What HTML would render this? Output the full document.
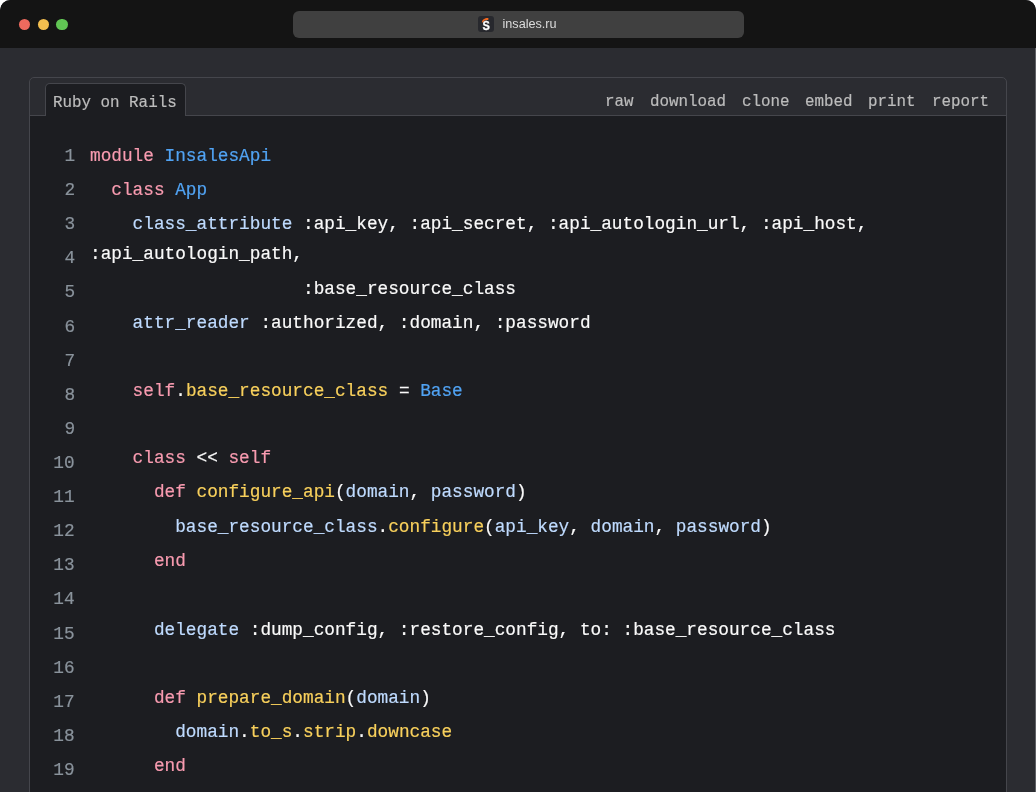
<!DOCTYPE html>
<html lang="en">
<head>
<meta charset="utf-8">
<title>insales.ru</title>
<style>
html,body{margin:0;padding:0;}
body{width:1036px;height:792px;overflow:hidden;background:#fff;position:relative;}
.win{position:absolute;left:0;top:0;width:1036px;height:792px;background:#2b2c31;border-radius:10.5px 10.5px 0 0;overflow:hidden;will-change:transform;}
.titlebar{position:absolute;left:0;top:0;width:1036px;height:48px;background:#141414;}
.dot{position:absolute;top:18.7px;width:11.6px;height:11.6px;border-radius:50%;}
.urlbar{position:absolute;left:292.5px;top:11px;width:451.5px;height:26.7px;border-radius:6px;background:#404040;}
.fav{position:absolute;left:185.5px;top:5px;width:16px;height:16px;}
.url{position:absolute;left:210px;top:0;height:26px;line-height:26px;color:#dcdcdc;font-family:"Liberation Sans", sans-serif;font-size:12.65px;white-space:pre;}
.edge{position:absolute;right:0;top:48px;width:1px;height:744px;background:#5f6065;}
.box{position:absolute;left:29px;top:77px;width:976px;height:760px;border:1px solid #45464c;border-radius:5px;background:#2b2c31;overflow:hidden;}
.code{position:absolute;left:0;top:37px;width:976px;height:730px;background:#1c1d21;border-top:1px solid #45464c;}
.tab{position:absolute;left:45px;top:83px;width:139px;height:32px;background:#1c1d21;border:1px solid #45464c;border-bottom:none;border-radius:5px 5px 0 0;}
.h{position:absolute;white-space:pre;color:#bcbcbc;font-family:"Liberation Mono", "DejaVu Sans Mono", monospace;font-size:16.7px;line-height:30px;height:30px;transform-origin:0 19px;transform:scale(0.94995,1.0);font-weight:normal;}
.l,.n,.h{-webkit-text-stroke:0.2px currentColor;}
.l,.n{position:absolute;white-space:pre;font-family:"Liberation Mono", "DejaVu Sans Mono", monospace;font-size:18.8px;line-height:30px;height:30px;font-weight:normal;}
.l{left:90.2px;transform-origin:0 20px;transform:scale(0.94488,1.0);color:#fafafa;}
.n{right:961.1px;transform-origin:100% 20px;transform:scale(0.94488,1.0);color:#8a939c;text-align:right;}
.k{color:#f89bb0;} .c{color:#51a3f3;} .v{color:#bfdbff;} .f{color:#f8d05c;}
</style>
</head>
<body>
<div class="win">
<div class="titlebar">
<div class="dot" style="left:18.7px;background:#ed6a5e;"></div>
<div class="dot" style="left:37.5px;background:#f4bf4f;"></div>
<div class="dot" style="left:56.3px;background:#61c554;"></div>
<div class="urlbar">
<svg class="fav" viewBox="0 0 16 16"><rect width="16" height="16" rx="3" fill="#27282d"/><path d="M3.9 6.4 C4.1 3.6 7.1 1.8 10.4 2.1 L10.3 4.0 C8.3 3.6 5.9 4.3 4.9 6.3 Z" fill="#f2671f"/><text x="0" y="0" transform="translate(8.05 14.2) scale(0.9 1)" text-anchor="middle" font-family="Liberation Sans, sans-serif" font-weight="bold" font-size="12.2" fill="#ffffff" stroke="#ffffff" stroke-width="0.3">S</text></svg>
<div class="url">insales.ru</div>
</div>
</div>
<div class="edge"></div>
<div class="box"><div class="code"></div></div>
<div class="tab"></div>
<div class="h" style="left:53.0px;top:88.00px;">Ruby on Rails</div>
<div class="h" style="left:605.2px;top:87.00px;">raw</div>
<div class="h" style="left:649.9px;top:87.00px;">download</div>
<div class="h" style="left:741.6px;top:87.00px;">clone</div>
<div class="h" style="left:805.0px;top:87.00px;">embed</div>
<div class="h" style="left:868.3px;top:87.00px;">print</div>
<div class="h" style="left:931.6px;top:87.00px;">report</div>
<div class="n" style="top:141.00px;">1</div>
<div class="n" style="top:175.00px;">2</div>
<div class="n" style="top:209.00px;">3</div>
<div class="n" style="top:243.00px;">4</div>
<div class="n" style="top:277.00px;">5</div>
<div class="n" style="top:312.00px;">6</div>
<div class="n" style="top:346.00px;">7</div>
<div class="n" style="top:380.00px;">8</div>
<div class="n" style="top:414.00px;">9</div>
<div class="n" style="top:448.00px;">10</div>
<div class="n" style="top:482.00px;">11</div>
<div class="n" style="top:516.00px;">12</div>
<div class="n" style="top:550.00px;">13</div>
<div class="n" style="top:584.00px;">14</div>
<div class="n" style="top:619.00px;">15</div>
<div class="n" style="top:653.00px;">16</div>
<div class="n" style="top:687.00px;">17</div>
<div class="n" style="top:721.00px;">18</div>
<div class="n" style="top:755.00px;">19</div>
<div class="l" style="top:141.00px;"><span class="k">module</span> <span class="c">InsalesApi</span></div>
<div class="l" style="top:175.00px;">  <span class="k">class</span> <span class="c">App</span></div>
<div class="l" style="top:209.00px;">    <span class="v">class_attribute</span> :api_key, :api_secret, :api_autologin_url, :api_host,</div>
<div class="l" style="top:239.00px;">:api_autologin_path,</div>
<div class="l" style="top:274.00px;">                    :base_resource_class</div>
<div class="l" style="top:308.00px;">    <span class="v">attr_reader</span> :authorized, :domain, :password</div>
<div class="l" style="top:376.00px;">    <span class="k">self</span>.<span class="f">base_resource_class</span> = <span class="c">Base</span></div>
<div class="l" style="top:443.00px;">    <span class="k">class</span> &lt;&lt; <span class="k">self</span></div>
<div class="l" style="top:477.00px;">      <span class="k">def</span> <span class="f">configure_api</span>(<span class="v">domain</span>, <span class="v">password</span>)</div>
<div class="l" style="top:512.00px;">        <span class="v">base_resource_class</span>.<span class="f">configure</span>(<span class="v">api_key</span>, <span class="v">domain</span>, <span class="v">password</span>)</div>
<div class="l" style="top:546.00px;">      <span class="k">end</span></div>
<div class="l" style="top:615.00px;">      <span class="v">delegate</span> :dump_config, :restore_config, to: :base_resource_class</div>
<div class="l" style="top:683.00px;">      <span class="k">def</span> <span class="f">prepare_domain</span>(<span class="v">domain</span>)</div>
<div class="l" style="top:717.00px;">        <span class="v">domain</span>.<span class="f">to_s</span>.<span class="f">strip</span>.<span class="f">downcase</span></div>
<div class="l" style="top:751.00px;">      <span class="k">end</span></div>
</div>
</body>
</html>
